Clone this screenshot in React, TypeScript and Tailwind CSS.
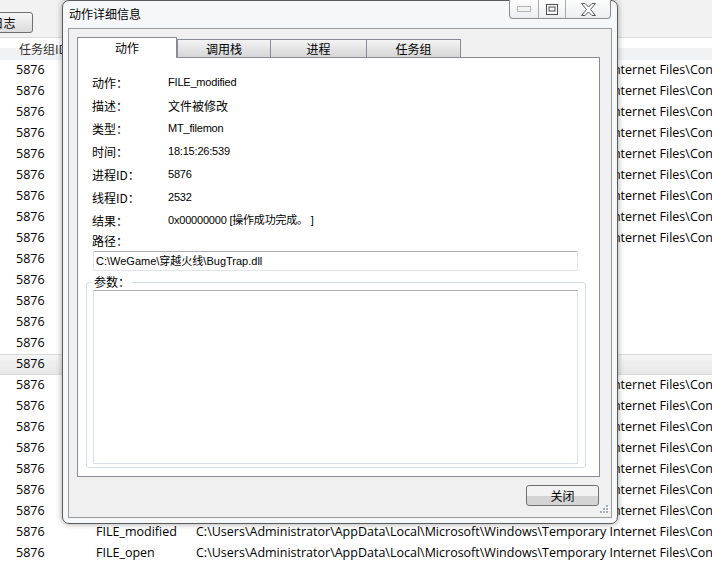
import React from "react";

const longPath =
  "C:\\Users\\Administrator\\AppData\\Local\\Microsoft\\Windows\\Temporary Internet Files\\Content.IE5\\index.dat";

type Row = { op: string; path: string };

const rows: Row[] = Array.from({ length: 24 }, (_, i) => {
  if (i >= 9 && i <= 14) return { op: "FILE_open", path: "C:\\WeGame\\穿越火线\\BugTrap.dll" };
  if (i === 23) return { op: "FILE_open", path: longPath };
  return { op: "FILE_modified", path: longPath };
});

const fields: [string, string, boolean][] = [
  ["动作：", "FILE_modified", false],
  ["描述：", "文件被修改", true],
  ["类型：", "MT_filemon", false],
  ["时间：", "18:15:26:539", false],
  ["进程ID：", "5876", false],
  ["线程ID：", "2532", false],
  ["结果：", "0x00000000 [操作成功完成。 ]", false],
];

function CaptionButtons() {
  return (
    <div className="absolute left-[446px] top-[-1px] flex h-[19px] w-[102px] rounded-b-[4px] border border-t-0 border-[#8d8d8d] bg-gradient-to-b from-[#fdfdfd] to-[#eceef1]">
      <div className="flex w-[28px] items-center justify-center">
        <svg width="14" height="6" viewBox="0 0 14 6">
          <rect x="0.5" y="0.5" width="13" height="5" fill="#f4f4f4" stroke="#b4b4b4" />
        </svg>
      </div>
      <div className="flex w-[27px] items-center justify-center border-l border-[#a9a9a9]">
        <svg width="12" height="11" viewBox="0 0 12 11">
          <rect x="0.5" y="0.5" width="11" height="10" fill="#fafafa" stroke="#4a4a4a" />
          <rect x="3" y="3" width="6" height="4" fill="#fafafa" stroke="#4a4a4a" />
        </svg>
      </div>
      <div className="flex flex-1 items-center justify-center border-l border-[#a9a9a9]">
        <svg width="15" height="13" viewBox="0 0 15 13">
          <polygon
            points="0.5,0.5 4,0.5 7.5,4 11,0.5 14.5,0.5 9.5,6.5 14.5,12.5 11,12.5 7.5,9 4,12.5 0.5,12.5 5.5,6.5"
            fill="#ffffff"
            stroke="#5a5a5a"
            strokeWidth="1"
            strokeLinejoin="round"
          />
        </svg>
      </div>
    </div>
  );
}

function Grip() {
  const dots: [number, number][] = [
    [6, 0],
    [3, 3],
    [6, 3],
    [0, 6],
    [3, 6],
    [6, 6],
  ];
  return (
    <svg className="absolute left-[537px] top-[504px]" width="9" height="9" viewBox="0 0 9 9">
      {dots.map(([x, y], i) => (
        <g key={i}>
          <rect x={x + 1} y={y + 1} width="2" height="2" fill="#ffffff" />
          <rect x={x} y={y} width="2" height="2" fill="#a8adb5" />
        </g>
      ))}
    </svg>
  );
}

export default function App() {
  return (
    <div className="relative h-[568px] w-[712px] overflow-hidden bg-white font-['Open_Sans','Noto_Sans_CJK_SC',sans-serif] text-[12.5px] text-black">
      {/* toolbar */}
      <div className="flex h-[37px] bg-[#f2f2f2] pt-[12px]">
        <div className="ml-[-50px] flex h-[21px] w-[83px] items-center justify-center rounded-[3px] border border-[#707070] bg-gradient-to-b from-[#f6f6f6] to-[#dcdcdc] font-['Noto_Sans_CJK_SC',sans-serif] text-[12px]">
          查看日志
        </div>
      </div>
      {/* header */}
      <div className="flex h-[23px] items-center border-t border-[#dadada] bg-gradient-to-b from-white from-45% to-[#f1f2f4] to-45% pb-[1px] pl-[19px] font-['Noto_Sans_CJK_SC',sans-serif] text-[12px] text-[#333]">
        任务组ID
      </div>
      {/* rows */}
      <div className="flex flex-col">
        {rows.map((r, i) => (
          <div
            key={i}
            className={
              i === 14
                ? "grid h-[21px] grid-cols-[96px_100px_1fr] items-center overflow-hidden whitespace-nowrap border-y border-[#dadada] bg-gradient-to-b from-[#f5f5f5] to-[#e8e8e8]"
                : "grid h-[21px] grid-cols-[96px_100px_1fr] items-center overflow-hidden whitespace-nowrap"
            }
          >
            <span className="pl-[16px]">5876</span>
            <span>{r.op}</span>
            <span>{r.path}</span>
          </div>
        ))}
      </div>

      {/* dialog window */}
      <div className="absolute left-[62px] top-0 flex h-[524px] w-[556px] flex-col rounded-[7px] border border-[#5b5b5b] bg-[#f6f7f9] shadow-[0_0_6px_rgba(0,0,0,0.35)]">
        <div className="flex h-[27px] shrink-0 items-center pb-[1px] pl-[6px] font-['Noto_Sans_CJK_SC',sans-serif] text-[12px] text-black">
          动作详细信息
        </div>
        <div className="mx-[5px] flex h-[490px] flex-col border border-[#9c9c9c] bg-[#f0f0f0] pl-[8px] pt-[8px] font-['Noto_Sans_CJK_SC',sans-serif] text-[12px] text-black">
          {/* tabs */}
          <div className="flex h-[20px] items-end">
            <div className="relative z-10 mb-[-1px] flex h-[21px] w-[100px] items-center justify-center border-x border-t border-[#898c95] bg-white pb-[1px]">
              动作
            </div>
            <div className="flex h-[18px] w-[94px] items-center justify-center border-x border-t border-[#898c95] bg-gradient-to-b from-[#f4f4f4] to-[#d6d6d6] pt-[1px]">
              调用栈
            </div>
            <div className="flex h-[18px] w-[96px] items-center justify-center border-r border-t border-[#898c95] bg-gradient-to-b from-[#f4f4f4] to-[#d6d6d6] pt-[1px]">
              进程
            </div>
            <div className="flex h-[18px] w-[94px] items-center justify-center border-r border-t border-[#898c95] bg-gradient-to-b from-[#f4f4f4] to-[#d6d6d6] pt-[1px]">
              任务组
            </div>
          </div>
          {/* panel */}
          <div className="flex h-[420px] w-[523px] flex-col border border-[#898c95] bg-white pt-[13px]">
            {fields.map(([label, value, cjk], i) => (
              <div key={i} className="flex h-[23px] items-center pl-[14px]">
                <span className="w-[76px] shrink-0">{label}</span>
                <span
                  className={
                    cjk
                      ? "text-[12px]"
                      : "font-['Liberation_Sans','Noto_Sans_CJK_SC',sans-serif] text-[11px] tracking-[-0.2px]"
                  }
                >
                  {value}
                </span>
              </div>
            ))}
            <div className="flex h-[18px] items-center pl-[14px]">路径：</div>
            <div className="ml-[15px] mt-[1px] flex h-[20px] w-[485px] items-center rounded-[2px] border border-[#e1e4ea] border-t-[#abadb3] pl-[2px] font-['Liberation_Sans','Noto_Sans_CJK_SC',sans-serif] text-[11px]">
              {"C:\\WeGame\\穿越火线\\BugTrap.dll"}
            </div>
            <fieldset className="ml-[8px] mt-[4px] h-[193px] w-[500px] rounded-[3px] border border-[#d5dfe5] pb-[3px]">
              <legend className="ml-[5px] px-[2px] text-[12px] leading-[14px]">参数：</legend>
              <div className="ml-[6px] mt-[1px] h-[174px] w-[485px] border border-[#dbdfe6] border-t-[#abadb3] bg-white" />
            </fieldset>
          </div>
          {/* buttons */}
          <div className="mt-[8px] flex w-[523px] justify-end pr-[1px]">
            <div className="flex h-[21px] w-[73px] items-center justify-center rounded-[3px] border border-[#707070] bg-gradient-to-b from-[#f2f2f2] from-50% to-[#d4d4d4] to-50%">
              关闭
            </div>
          </div>
        </div>
        <CaptionButtons />
        <Grip />
      </div>
    </div>
  );
}
